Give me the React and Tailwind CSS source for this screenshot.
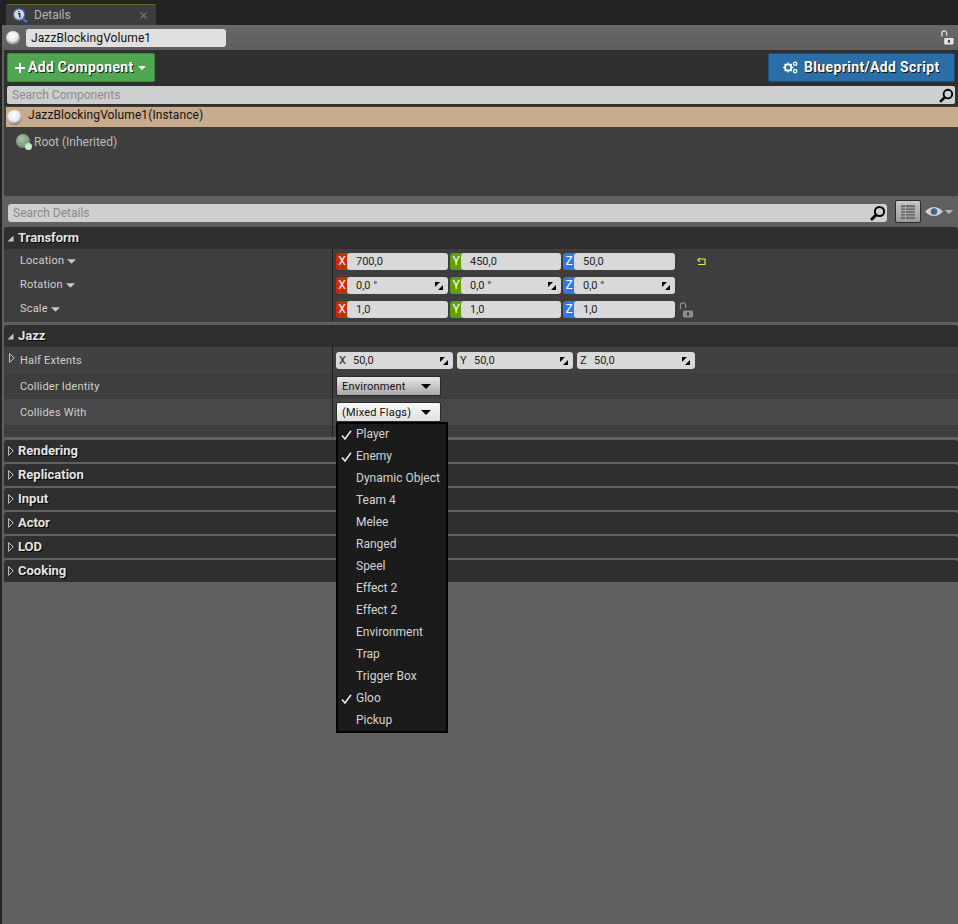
import React from "react";

const Sphere = ({ className }) => (
  <div className={"rounded-full bg-[radial-gradient(circle_at_45%_35%,#ffffff_0%,#e8e8e8_45%,#8a8a8a_70%,#1c1c1c_100%)] " + className} />
);

const Lock = ({ color, className }) => (
  <svg viewBox="0 0 14 16" className={className}>
    <path d="M1.5 7V3.5a2.6 2.6 0 0 1 5.2 0V6" fill="none" stroke={color} strokeWidth="1.3" />
    <rect x="4" y="8.5" width="10" height="7" rx="1" fill={color} />
    <rect x="8" y="10.5" width="2" height="3" fill="#333" />
  </svg>
);

const Search = ({ className }) => (
  <svg viewBox="0 0 16 16" className={className}>
    <circle cx="9.5" cy="6.5" r="4.6" fill="none" stroke="#000" strokeWidth="2" />
    <path d="M6 10 L2 14" stroke="#000" strokeWidth="3" strokeLinecap="round" />
  </svg>
);

const Caret = ({ className }) => (
  <svg viewBox="0 0 10 5" className={className}>
    <path d="M0 0H10L5 5Z" fill="currentColor" />
  </svg>
);

const ExpandOpen = () => (
  <svg viewBox="0 0 7 7" className="w-[7px] h-[7px] shrink-0">
    <path d="M6.5 0.5V6.5H0.5Z" fill="#c8c8c8" />
  </svg>
);

const ExpandClosed = () => (
  <svg viewBox="0 0 6 10" className="w-[6px] h-[10px] shrink-0">
    <path d="M0.6 0.7L5.3 5L0.6 9.3Z" fill="none" stroke="#c8c8c8" strokeWidth="1" />
  </svg>
);

const Spin = () => (
  <svg viewBox="0 0 9 9" className="w-[8px] h-[8px] shrink-0">
    <path d="M0 0H5.6L0 5.6Z" fill="#000" />
    <path d="M9 9H3.4L9 3.4Z" fill="#000" />
  </svg>
);

const Gears = () => (
  <svg viewBox="0 0 16 14" className="w-[15px] h-[13px] shrink-0">
    <circle cx="5.5" cy="7" r="3.4" fill="none" stroke="#fff" strokeWidth="2" />
    <path d="M5.5 1.5V3 M5.5 11V12.5 M0 7H1.5 M9.5 7H11 M1.7 3.2L2.7 4.2 M8.3 9.8L9.3 10.8 M1.7 10.8L2.7 9.8 M8.3 4.2L9.3 3.2" stroke="#fff" strokeWidth="1.6" />
    <circle cx="13" cy="3" r="1.8" fill="none" stroke="#fff" strokeWidth="1.4" />
    <circle cx="13" cy="11" r="1.8" fill="none" stroke="#fff" strokeWidth="1.4" />
  </svg>
);

const Check = () => (
  <svg viewBox="0 0 11 10" className="w-[11px] h-[10px]">
    <path d="M1 5.5L4 9L10 0.8" fill="none" stroke="#e8e8e8" strokeWidth="1.6" />
  </svg>
);

const Section = ({ title, open, children }) => (
  <div className="border-b-[2px] border-[#606060]">
    <div className="h-[22px] bg-[#2f2f2f] rounded-t-[3px] flex items-center">
      <span className={"w-[14px] shrink-0 flex items-center " + (open ? "pl-[3px]" : "pl-[4px]")}>
        {open ? <ExpandOpen /> : <ExpandClosed />}
      </span>
      <span className="font-bold text-[13px] text-[#e4e4e4] [text-shadow:1px_1px_0_#000]">{title}</span>
    </div>
    {children}
  </div>
);

const AxisField = ({ axis, value, badge, width, spin }) => (
  <div className="flex h-[17px] shrink-0" style={{ width }}>
    <div className={"w-[12px] rounded-l-[3px] text-[12px] leading-[17px] text-white text-center " + badge}>{axis}</div>
    <div className="flex-1 -ml-px bg-[#d9d9d9] rounded-[3px] flex items-center justify-between pl-[9px] pr-[5px] text-[11px] text-[#222]">
      <span className="translate-y-px">{value}</span>
      {spin && <Spin />}
    </div>
  </div>
);

const Triple = ({ vals, spin }) => (
  <div className="flex gap-[2px]">
    <AxisField axis="X" value={vals[0]} badge="bg-[#cc2a00]" width="112px" spin={spin} />
    <AxisField axis="Y" value={vals[1]} badge="bg-[#62a000]" width="111px" spin={spin} />
    <AxisField axis="Z" value={vals[2]} badge="bg-[#2d79e8]" width="112px" spin={spin} />
  </div>
);

const PropLabel = ({ label, caret, expander, low }) => (
  <div className={"w-[328px] shrink-0 pl-[5px] flex items-center text-[11px] tracking-[0.2px] text-[#d0d0d0] relative " + (low ? "pt-[2px]" : "")}>
    {expander && <span className="absolute left-[5px] top-1/2 -translate-y-[7px]"><ExpandClosed /></span>}
    <span className="ml-[11px]">{label}</span>
    {caret && <Caret className="w-[9px] h-[5px] ml-[3px] mt-[1px] text-[#c8c8c8]" />}
  </div>
);

const Extent = ({ axis, width }) => (
  <div className="h-[17px] bg-[#d9d9d9] rounded-[3px] flex items-center pl-[3px] pr-[5px] text-[11px] text-[#222] shrink-0" style={{ width }}>
    <span className="w-[14px] translate-y-px">{axis}</span>
    <span className="flex-1 translate-y-px">50,0</span>
    <Spin />
  </div>
);

const Select = ({ label, light }) => (
  <div className={"w-[105px] h-[20px] rounded-[2px] flex items-center justify-between pl-[5px] pr-[9px] text-[11px] tracking-[0.2px] text-[#111] border border-[#2a2a2a] " + (light ? "bg-[linear-gradient(#f8f8f8,#e0e0e0)]" : "bg-[linear-gradient(#e8e8e8,#a8a8a8)]")}>
    <span className="translate-y-px">{label}</span>
    <Caret className="w-[10px] h-[5px] text-black" />
  </div>
);

const items = [
  ["Player", true], ["Enemy", true], ["Dynamic Object"], ["Team 4"], ["Melee"], ["Ranged"], ["Speel"],
  ["Effect 2"], ["Effect 2"], ["Environment"], ["Trap"], ["Trigger Box"], ["Gloo", true], ["Pickup"],
];

export default function App() {
  return (
    <div className="w-[958px] h-[924px] bg-[#222222] overflow-hidden flex flex-col text-[12px] font-['Roboto',sans-serif]">
      <div className="h-[25px] shrink-0 pl-[6px] pt-[4px] flex">
        <div className="w-[150px] h-[21px] bg-[#3d3d3d] rounded-t-[3px] border-t border-[#6b6a2a] flex items-center pl-[6px] pr-[9px]">
          <svg viewBox="0 0 18 16" className="w-[17px] h-[15px] shrink-0">
            <path d="M11 11L16 15" stroke="#3f7fd0" strokeWidth="2.4" />
            <circle cx="7.5" cy="7" r="6" fill="#d9d9e3" stroke="#3f6fb5" strokeWidth="1.4" />
            <path d="M7.5 3.2V4.6 M6.3 6.2H8.2V10.4" stroke="#20304a" strokeWidth="1.5" fill="none" />
          </svg>
          <span className="ml-[5px] -mt-[1px] text-[12px] text-[#b4b4b4]">Details</span>
          <svg viewBox="0 0 7 7" className="ml-auto w-[7px] h-[7px]">
            <path d="M0.5 0.5L6.5 6.5M6.5 0.5L0.5 6.5" stroke="#777" strokeWidth="1.2" />
          </svg>
        </div>
      </div>

      <div className="flex-1 ml-[2px] bg-[#606060] flex flex-col">
        <div className="h-[25px] shrink-0 bg-[linear-gradient(#686868,#5e5e5e)] flex items-center pl-[4px] pr-[4px]">
          <Sphere className="w-[14px] h-[14px] shrink-0" />
          <div className="ml-[6px] w-[200px] h-[18px] bg-[#e0e0e0] rounded-[3px] px-[5px] text-[12px] tracking-[0.1px] leading-[18px] text-[#111]">JazzBlockingVolume1</div>
          <Lock color="#e4e4e4" className="w-[14px] h-[15px] ml-auto" />
        </div>

        <div className="ml-[2px] h-[146px] shrink-0 bg-[#2f2f2f] flex flex-col rounded-b-[3px] overflow-hidden">
          <div className="h-[36px] shrink-0 pl-[3px] pr-[3px] pt-[3px] flex justify-between">
            <button className="w-[148px] h-[29px] bg-[#51a652] border border-[#3f8a41] rounded-[2px] flex items-center pl-[7px] text-white font-bold text-[14px] tracking-[0.3px] [text-shadow:1px_1px_0_#1a1a1a]">
              <svg viewBox="0 0 10 10" className="w-[10px] h-[10px] mr-[3px]"><path d="M5 0V10M0 5H10" stroke="#fff" strokeWidth="2" /></svg>
              Add Component
              <Caret className="w-[8px] h-[4px] ml-[4px] text-white" />
            </button>
            <button className="w-[187px] h-[29px] bg-[#2a6ea8] border border-[#1d4f7d] rounded-[2px] flex items-center pl-[14px] gap-[6px] text-white font-bold text-[14px] tracking-[0.35px] [text-shadow:1px_1px_0_#111]">
              <Gears />
              Blueprint/Add Script
            </button>
          </div>
          <div className="h-[18px] shrink-0 mx-[3px] bg-[#cfcfcf] rounded-[2px] flex items-center justify-between pl-[5px] pr-[1px] text-[12px] text-[#8a8a8a]">
            <span>Search Components</span>
            <Search className="w-[15px] h-[15px]" />
          </div>
          <div className="flex-1 mt-[2px] bg-[#3e3e3e] flex flex-col">
            <div className="h-[21px] shrink-0 mt-[1px] ml-[2px] bg-[#c7ab8b] border-b border-[#3a3a3a] flex items-center">
              <Sphere className="w-[15px] h-[15px] shrink-0 ml-[1px]" />
              <span className="ml-[6px] text-[12px] tracking-[0.1px] text-[#111] -mt-[5px]">JazzBlockingVolume1(Instance)</span>
            </div>
            <div className="h-[20px] mt-[4px] flex items-center pl-[12px]">
              <div className="relative w-[16px] h-[16px] shrink-0">
                <div className="w-[14px] h-[14px] rounded-full bg-[radial-gradient(circle_at_40%_35%,#a8c4a8,#5f7a62)]" />
                <div className="absolute right-0 bottom-0 w-[7px] h-[7px] rounded-full bg-[#c8ecc8]" />
              </div>
              <span className="ml-[2px] text-[12px] text-[#bdbdbd]">Root (Inherited)</span>
            </div>
          </div>
        </div>

        <div className="h-[31px] shrink-0 flex items-center pl-[6px]">
          <div className="w-[879px] h-[18px] mt-[2px] bg-[#cfcfcf] rounded-[3px] flex items-center justify-between pl-[5px] pr-[1px] text-[12px] text-[#8a8a8a]">
            <span>Search Details</span>
            <Search className="w-[16px] h-[16px]" />
          </div>
          <div className="ml-[8px] w-[26px] h-[23px] bg-[linear-gradient(#c8c8c8,#9a9a9a)] border border-[#2a2a2a] rounded-[2px] flex items-center justify-center">
            <svg viewBox="0 0 14 14" className="w-[14px] h-[14px]">
              <path d="M0 0H14V14H0Z" fill="#707070" />
              <path d="M4.5 0V14 M0 2.8H14 M0 5.6H14 M0 8.4H14 M0 11.2H14" stroke="#b8b8b8" strokeWidth="0.8" />
            </svg>
          </div>
          <svg viewBox="0 0 18 11" className="ml-[4px] w-[18px] h-[11px]">
            <path d="M0 5.5Q9 -3.5 18 5.5Q9 14.5 0 5.5Z" fill="#d0d0d0" />
            <circle cx="9" cy="5.5" r="3.2" fill="#4a5f8a" />
          </svg>
          <Caret className="w-[8px] h-[4px] ml-[2px] text-[#bbbbbb]" />
        </div>

        <div className="ml-[2px] flex flex-col">
          <Section title="Transform" open>
            <div className="bg-[#3e3e3e] h-[73px] flex">
              <div className="flex flex-col w-[328px] shrink-0">
                <div className="h-[24px] flex"><PropLabel label="Location" caret /></div>
                <div className="h-[24px] flex"><PropLabel label="Rotation" caret /></div>
                <div className="h-[24px] flex"><PropLabel label="Scale" caret /></div>
              </div>
              <div className="h-[72px] border-l border-[#1e1e1e] pl-[3px] flex flex-col pt-[4px] gap-[7px]">
                <div className="flex items-center">
                  <Triple vals={["700,0", "450,0", "50,0"]} />
                  <svg viewBox="0 0 9 8" className="w-[9px] h-[8px] ml-[22px]">
                    <path d="M3 1H8V6.5H1 M3 0L0.8 2L3 3.6" fill="none" stroke="#e8e848" strokeWidth="1.2" />
                  </svg>
                </div>
                <Triple vals={["0,0 °", "0,0 °", "0,0 °"]} spin />
                <div className="flex items-center h-[17px]">
                  <Triple vals={["1,0", "1,0", "1,0"]} />
                  <Lock color="#8e8e8e" className="w-[14px] h-[16px] ml-[4px]" />
                </div>
              </div>
            </div>
          </Section>

          <div className="h-px" />

          <Section title="Jazz" open>
            <div className="bg-[#3e3e3e] h-[90px] flex flex-col relative">
              <div className="h-[26px] flex bg-[#414141]">
                <PropLabel label="Half Extents" expander low />
                <div className="border-l border-[#1e1e1e] pl-[3px] pt-[5px] flex gap-[4px]">
                  <Extent axis="X" width="117px" />
                  <Extent axis="Y" width="116px" />
                  <Extent axis="Z" width="118px" />
                </div>
              </div>
              <div className="h-[26px] flex">
                <PropLabel label="Collider Identity" low />
                <div className="border-l border-[#1e1e1e] pl-[3px] pt-[3px]"><Select label="Environment" /></div>
              </div>
              <div className="h-[26px] flex bg-[#484848]">
                <PropLabel label="Collides With" low />
                <div className="border-l border-[#1e1e1e] pl-[3px] pt-[3px] relative">
                  <Select label="(Mixed Flags)" light />
                  <div className="absolute z-10 left-[3px] top-[23px] w-[112px] h-[311px] border-[2px] border-black bg-[#1b1b1b] flex flex-col">
                    {items.map(([t, c], i) => (
                      <div key={i} className="h-[22px] shrink-0 flex items-center text-[12px] text-[#d4d4d4]">
                        <span className="w-[18px] pl-[3px] flex items-center">{c && <Check />}</span>
                        <span className="-translate-y-px">{t}</span>
                      </div>
                    ))}
                  </div>
                </div>
              </div>
              <div className="flex-1 ml-[328px] w-px bg-[#1e1e1e]" />
            </div>
          </Section>

          <div className="h-[1px]" />

          {["Rendering", "Replication", "Input", "Actor", "LOD", "Cooking"].map((t) => (
            <Section key={t} title={t} />
          ))}
        </div>
      </div>
    </div>
  );
}
